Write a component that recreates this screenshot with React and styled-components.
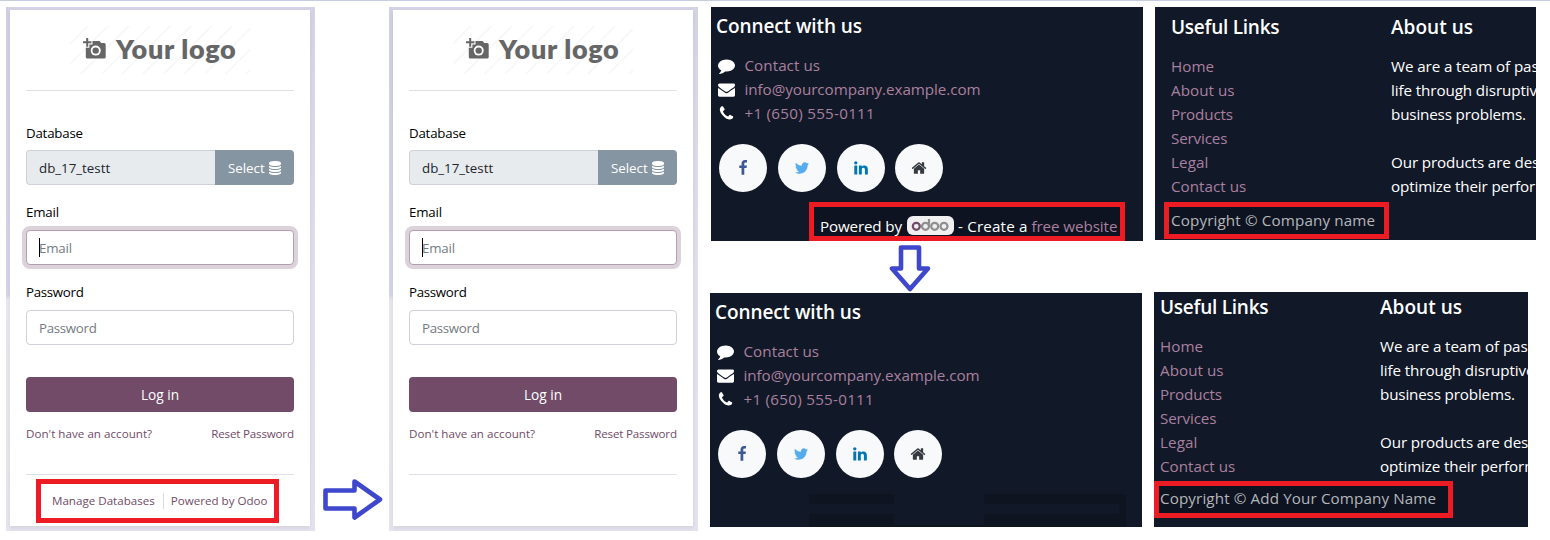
import React from "react";
import styled, { createGlobalStyle } from "styled-components";

const GlobalStyle = createGlobalStyle`
  *, *::before, *::after { box-sizing: border-box; }
  body { margin: 0; background: #fff; font-family: "Open Sans", "Noto Sans", sans-serif; }
`;

/* ---------- shared ---------- */

const Txt = styled.span`
  letter-spacing: ${(p) => p.$ls || 0}px;
  margin-right: ${(p) => -(p.$ls || 0)}px;
  white-space: nowrap;
`;

const Page = styled.main`
  display: flex;
  align-items: flex-start;
  width: 1550px;
  height: 540px;
  padding: 6px 0 0 6px;
  border-top: 1px solid #c6cde0;
  overflow: hidden;
`;

const Glyph = styled.svg`
  display: block;
  flex: none;
  width: ${(p) => p.$size || 16}px;
  height: ${(p) => p.$size || 16}px;
  fill: currentColor;
`;

const PATHS = {
  comment:
    "M1792 896q0 174-120 321.5t-326 233-450 85.5q-70 0-145-8-198 175-460 242-49 14-114 22-17 2-30.5-9t-17.5-29v-1q-3-4-.5-12t2-10 4.5-9.5l6-9 7-8.5 8-9q7-8 31-34.5t34.5-38 31-39.5 32.5-51 27-59 26-76q-157-89-247.5-220t-90.5-281q0-130 71-248.5t191-204.5 286-136.5 348-50.5q244 0 450 85.5t326 233 120 321.5z",
  envelope:
    "M1792 710v794q0 66-47 113t-113 47h-1472q-66 0-113-47t-47-113v-794q44 49 101 87 362 246 497 345 57 42 92.5 65.5t94.5 48 110 24.5h2q51 0 110-24.5t94.5-48 92.5-65.5q170-123 498-345 57-39 100-87zm0-294q0 79-49 151t-122 123q-376 261-468 325-10 7-42.5 31t-54 38.5-52 32.5-57.5 27-50 9h-2q-23 0-50-9t-57.5-27-52-32.5-54-38.5-42.5-31q-91-64-262-182.5t-205-142.5q-62-42-117-115.5t-55-136.5q0-78 41.5-130t118.5-52h1472q65 0 112.5 47t47.5 113z",
  phone:
    "M1600 1240q0 27-10 70.5t-21 68.5q-21 50-122 106-94 51-186 51-27 0-53-3.5t-57.5-12.5-47-14.5-55.5-20.5-49-18q-98-35-175-83-127-79-264-216t-216-264q-48-77-83-175-3-9-18-49t-20.5-55.5-14.5-47-12.5-57.5-3.5-53q0-92 51-186 56-101 106-122 25-11 68.5-21t70.5-10q14 0 21 3 18 6 53 76 11 19 30 54t35 63.5 31 53.5q3 4 17.5 25t21.5 35.5 7 28.5q0 20-28.5 50t-62 55-62 53-28.5 46q0 9 5 22.5t8.5 20.5 14 24 11.5 19q76 137 174 235t235 174q2 1 19 11.5t24 14 20.5 8.500 22.500 5q18 0 46-28.5t53-62 55-62 50-28.5q14 0 28.5 7t35.5 21.5 25 17.5q25 15 53.5 31t63.5 35 54 30q70 35 76 53 3 7 3 21z",
  facebook:
    "M1343 12v264h-157q-86 0-116 36t-30 108v189h293l-39 296h-254v759h-306v-759h-255v-296h255v-218q0-186 104-288.5t277-102.5q147 0 228 12z",
  twitter:
    "M1684 408q-67 98-162 167 1 14 1 42 0 130-38 259.5t-115.5 248.5-184.5 210.5-258 146-323 54.5q-271 0-496-145 35 4 78 4 225 0 401-138-105-2-188-64.5t-114-159.5q33 5 61 5 43 0 85-11-112-23-185.5-111.5t-73.5-205.5v-4q68 38 146 41-66-44-105-115t-39-154q0-88 44-163 121 149 294.5 238.5t371.5 99.5q-8-38-8-74 0-134 94.5-228.5t228.5-94.5q140 0 236 102 109-21 205-78-37 115-142 178 93-10 186-50z",
  linkedin:
    "M477 625v991h-330v-991h330zm21-306q1 73-50.5 122t-135.5 49h-2q-82 0-132-49t-50-122q0-74 51.5-122.5t134.5-48.5 133 48.5 51 122.5zm1166 729v568h-329v-530q0-105-40.5-164.5t-126.5-59.5q-63 0-105.5 34.5t-63.5 85.5q-11 30-11 81v553h-329q2-399 2-647t-1-296l-1-48h329v144h-2q20-32 41-56t56.5-52 87-43.5 114.5-15.5q171 0 275 113.5t104 332.5z",
  home: "M1472 992v480q0 26-19 45t-45 19h-384v-384h-256v384h-384q-26 0-45-19t-19-45v-480q0-1 .5-3t.5-3l575-474 575 474q1 2 1 6zm223-69l-62 74q-8 9-21 11h-3q-13 0-21-7l-692-577-692 577q-12 8-24 7-13-2-21-11l-62-74q-8-10-7-23.5t11-21.5l719-599q32-26 76-26t76 26l244 204v-195q0-14 9-23t23-9h192q14 0 23 9t9 23v408l219 182q10 8 11 21.5t-7 23.5z",
  database:
    "M896 768q237 0 443-43t325-127v170q0 69-103 128t-280 93.5-385 34.5-385-34.5-280-93.5-103-128v-170q119 84 325 127t443 43zm0 768q237 0 443-43t325-127v170q0 69-103 128t-280 93.5-385 34.5-385-34.5-280-93.5-103-128v-170q119 84 325 127t443 43zm0-384q237 0 443-43t325-127v170q0 69-103 128t-280 93.5-385 34.5-385-34.5-280-93.5-103-128v-170q119 84 325 127t443 43zm0-1152q208 0 385 34.5t280 93.5 103 128v128q0 69-103 128t-280 93.5-385 34.5-385-34.5-280-93.5-103-128v-128q0-69 103-128t280-93.5 385-34.5z",
};

const Icon = ({ name, size }) => (
  <Glyph viewBox="0 0 1792 1792" $size={size} aria-hidden="true">
    <path d={PATHS[name]} />
  </Glyph>
);

/* ---------- login panel ---------- */

const LoginFrame = styled.section`
  flex: none;
  width: 309px;
  height: 524px;
  padding: 3px 5px 5px 4px;
  background:
    linear-gradient(170deg, #d0cfe3 0%, #d4d3e9 98%, #e8e7ef 100%) 0 0 / 4px 293px no-repeat,
    linear-gradient(#e8e7ef, #e6e5ef) 0 293px / 4px 231px no-repeat,
    linear-gradient(#d4d3e6, #e0deed 50%, #e4e2ee) 304px 0 / 5px 524px no-repeat,
    linear-gradient(#d4d3e5, #d4d3e5) 0 0 / 309px 3px no-repeat,
    #e4e3ed;
`;

const Card = styled.div`
  display: flex;
  flex-direction: column;
  height: 516px;
  padding: 16px 16px 0;
  background: #fff;
  box-shadow: 0 2px 4px rgba(0, 0, 0, 0.07);
`;

const Logo = styled.div`
  display: flex;
  align-items: center;
  align-self: center;
  width: 180px;
  height: 48px;
  padding-left: 13px;
  color: #666;
  background: repeating-linear-gradient(135deg, #fff 0 11.3px, #f8f8f8 11.8px 13.2px, #fff 13.7px 14.6px);
`;

const LogoText = styled.span`
  margin: -2px 0 0 10px;
  font: 800 27px/48px Lato, sans-serif;
  letter-spacing: 0.65px;
  white-space: nowrap;
`;

const Camera = styled.svg`
  flex: none;
  width: 23px;
  height: 22px;
  margin-top: -3px;
`;

const Rule = styled.hr`
  width: 100%;
  height: 1px;
  margin: ${(p) => p.$top}px 0 0;
  border: 0;
  background: ${(p) => p.$color || "#dee0e4"};
`;

const Label = styled.label`
  margin-top: ${(p) => p.$top}px;
  font-size: 13.3px;
  line-height: 20px;
  color: #000;
`;

const Field = styled.div`
  display: flex;
  align-items: center;
  height: 35px;
  margin-top: ${(p) => p.$top || 8}px;
  padding-left: 12px;
  font-size: 13.3px;
  color: ${(p) => (p.$filled ? "#21262d" : "#757b82")};
  background: ${(p) => (p.$filled ? "#e8ebee" : "#fff")};
  border: 1px solid ${(p) => (p.$focus ? "#b49fb2" : "#cfd1d9")};
  border-radius: 4px;
  box-shadow: ${(p) => (p.$focus ? "0 0 0 4px #dcd2da" : "none")};
`;

const DbRow = styled.div`
  display: flex;
  margin-top: 7px;
  ${Field} { flex: 1; margin-top: 0; border-right: 0; border-radius: 4px 0 0 4px; }
`;

const SelectButton = styled.button`
  display: flex;
  align-items: center;
  gap: 3px;
  width: 79px;
  height: 35px;
  padding: 0 0 0 13px;
  font: 13.3px "Open Sans", sans-serif;
  color: #fff;
  background: #8595a2;
  border: 0;
  border-radius: 0 4px 4px 0;
`;

const Caret = styled.i`
  width: 1px;
  height: 19px;
  margin-right: -1px;
  background: #000;
`;

const LoginButton = styled.button`
  height: 35px;
  margin-top: 32px;
  padding: 0;
  font: 13.7px "Open Sans", sans-serif;
  color: #fff;
  background: #714b67;
  border: 0;
  border-radius: 4px;
`;

const LinkRow = styled.div`
  display: flex;
  justify-content: ${(p) => (p.$footer ? "flex-start" : "space-between")};
  margin: ${(p) => (p.$footer ? "17px 0 0 26px" : "13px 0 0")};
  font-size: 11.6px;
  line-height: 18px;
  color: #714b67;
`;

const Divider = styled.i`
  width: 1px;
  height: 16px;
  margin: 1px 7px 0 8px;
  background: #d8dae3;
`;

const RedBox = styled.div`
  position: absolute;
  left: ${(p) => p.$x}px;
  top: ${(p) => p.$y}px;
  width: ${(p) => p.$w}px;
  height: ${(p) => p.$h}px;
  border: 5px solid #ed1c24;
  pointer-events: none;
`;

const Marked = styled.div`
  position: relative;
  flex: none;
`;

function LoginPanel({ footer }) {
  return (
    <Marked>
      <LoginFrame>
        <Card>
          <Logo>
            <Camera viewBox="0 0 23 22">
              <path
                fill="#666"
                d="M3.2 0h2v3.300h3.200v2H5.200v3.400h-2V5.300H0v-2h3.200zM9.500 3h7l1.700 2h3q1.500 0 1.500 1.500V19q0 1.500-1.500 1.500H4.300Q2.800 20.500 2.800 19V9.800H6.400V6.400H9.500z"
              />
              <circle cx="12.700" cy="12.600" r="5" fill="#fff" />
              <circle cx="12.700" cy="12.600" r="3.200" fill="#666" />
            </Camera>
            <LogoText>Your logo</LogoText>
          </Logo>
          <Rule $top={16} />
          <Label $top={32}><Txt $ls={-0.21}>Database</Txt></Label>
          <DbRow>
            <Field $filled><Txt>db_17_testt</Txt></Field>
            <SelectButton>
              <Txt>Select</Txt>
              <Icon name="database" size={14} />
            </SelectButton>
          </DbRow>
          <Label $top={17}><Txt $ls={-0.2}>Email</Txt></Label>
          <Field $focus><Caret /><Txt $ls={-0.2}>Email</Txt></Field>
          <Label $top={17}><Txt $ls={-0.3}>Password</Txt></Label>
          <Field><Txt $ls={-0.3}>Password</Txt></Field>
          <LoginButton>Log in</LoginButton>
          <LinkRow>
            <Txt $ls={0.03}>Don't have an account?</Txt>
            <Txt $ls={-0.18}>Reset Password</Txt>
          </LinkRow>
          <Rule $top={31} $color="#dfdfe9" />
          {footer && (
            <LinkRow $footer>
              <Txt>Manage Databases</Txt>
              <Divider />
              <Txt>Powered by Odoo</Txt>
            </LinkRow>
          )}
        </Card>
      </LoginFrame>
      {footer && <RedBox $x={30} $y={472} $w={243} $h={44} />}
    </Marked>
  );
}

/* ---------- arrows ---------- */

const ArrowRight = styled.svg`
  flex: none;
  width: 62px;
  height: 44px;
  margin: 470px 5px 0 7px;
`;

const ArrowDown = styled.svg`
  display: block;
  width: 46px;
  height: 52px;
  margin-left: 177px;
`;

/* ---------- footer previews ---------- */

const Column = styled.div`
  flex: none;
  width: ${(p) => p.$w}px;
  margin-left: ${(p) => p.$left}px;
`;

const Dark = styled.section`
  position: relative;
  width: ${(p) => p.$w}px;
  height: ${(p) => p.$h}px;
  margin: ${(p) => p.$top || 0}px 0 0 ${(p) => p.$left || 0}px;
  overflow: hidden;
  color: #fff;
  background: #111827;
  font-size: 15.2px;
`;

const Heading = styled.h5`
  margin: 0;
  font: 600 19px/24px "Open Sans", sans-serif;
  white-space: nowrap;
`;

const Connect = styled.div`
  padding: ${(p) => p.$top}px 0 0 5px;
`;

const ContactList = styled.ul`
  display: grid;
  grid-auto-rows: 24px;
  margin: 15px 0 0;
  padding: 0 0 0 2px;
  list-style: none;
`;

const Contact = styled.li`
  display: flex;
  align-items: center;
  gap: 9.5px;
  line-height: 24px;
`;

const IconCell = styled.span`
  display: flex;
  justify-content: center;
  width: 17px;
`;

const Purple = styled.span`
  color: #a9809f;
`;

const Socials = styled.div`
  display: flex;
  gap: 11px;
  margin: 19px 0 0 3px;
`;

const Social = styled.span`
  display: grid;
  place-items: center;
  width: 48px;
  height: 48px;
  border-radius: 50%;
  color: ${(p) => p.$color};
  background: #f8f9fa;
  &:last-child { margin-left: -1px; }
`;

const Powered = styled.div`
  position: relative;
  display: flex;
  align-items: center;
  width: 306px;
  height: 29px;
  margin: 15px 0 0 103px;
  padding: 8px 0 0 6px;
  background: #0d1320;
  outline: 5px solid #ed1c24;
  line-height: 24px;
`;

const OdooBadge = styled.svg`
  flex: none;
  width: 47px;
  height: 19px;
  margin: 0 4px 0 5px;
`;

const Shade = styled.i`
  position: absolute;
  left: ${(p) => p.$x}px;
  top: ${(p) => p.$y}px;
  width: ${(p) => p.$w}px;
  height: ${(p) => p.$h}px;
  background: #0e1420;
`;

const CONTACTS = [
  ["comment", "Contact us", 0.05],
  ["envelope", "info@yourcompany.example.com", -0.05],
  ["phone", "+1 (650) 555-0111", 0.27],
];

const SOCIALS = [
  ["facebook", "#3b5998"],
  ["twitter", "#55acee"],
  ["linkedin", "#0077b5"],
  ["home", "#343a40"],
];

function ConnectBlock({ top }) {
  return (
    <Connect $top={top}>
      <Heading><Txt $ls={-0.09}>Connect with us</Txt></Heading>
      <ContactList>
        {CONTACTS.map(([icon, text, ls]) => (
          <Contact key={icon}>
            <IconCell><Icon name={icon} size={17} /></IconCell>
            <Purple><Txt $ls={ls}>{text}</Txt></Purple>
          </Contact>
        ))}
      </ContactList>
      <Socials>
        {SOCIALS.map(([icon, color]) => (
          <Social key={icon} $color={color}><Icon name={icon} size={16} /></Social>
        ))}
      </Socials>
    </Connect>
  );
}

const LinksGrid = styled.div`
  display: grid;
  grid-template-columns: 220px 1fr;
  padding: ${(p) => p.$top}px 0 0 ${(p) => p.$left}px;
`;

const Lines = styled.div`
  display: grid;
  grid-auto-rows: 24px;
  margin-top: 15px;
  line-height: 24px;
  color: ${(p) => p.$color};
`;

const Copyright = styled.div`
  position: relative;
  width: ${(p) => p.$w}px;
  height: 27px;
  margin: ${(p) => p.$top}px 0 0 ${(p) => p.$left}px;
  padding-left: ${(p) => p.$pad}px;
  background: #0d1320;
  outline: 5px solid #ed1c24;
  line-height: ${(p) => p.$line}px;
  color: #b4b6ba;
`;

const LINKS = [
  ["Home", 0.03], ["About us", 0.05], ["Products", -0.14],
  ["Services", -0.15], ["Legal", 0.1], ["Contact us", 0.02],
];

const ABOUT = [
  ["We are a team of pas", -0.1], ["life through disruptive", -0.1],
  ["business problems.", -0.15], ["", 0],
  ["Our products are des", -0.12], ["optimize their perform", -0.13],
];

function LinksBlock({ top, left }) {
  return (
    <LinksGrid $top={top} $left={left}>
      <div>
        <Heading><Txt $ls={-0.25}>Useful Links</Txt></Heading>
        <Lines $color="#a9809f">
          {LINKS.map(([t, ls]) => <Txt key={t} $ls={ls}>{t}</Txt>)}
        </Lines>
      </div>
      <div>
        <Heading><Txt $ls={0.02}>About us</Txt></Heading>
        <Lines $color="#fff">
          {ABOUT.map(([t, ls]) => <Txt key={t} $ls={ls}>{t}</Txt>)}
        </Lines>
      </div>
    </LinksGrid>
  );
}

export default function App() {
  return (
    <>
      <GlobalStyle />
      <Page>
        <LoginPanel footer />
        <ArrowRight viewBox="322 477 62 44">
          <path
            d="M325.500 490.500H354.500V481.500L380 499.500L354.500 517.500V508.500H325.500Z"
            fill="none" stroke="#3f48cc" strokeWidth="4.600" strokeLinejoin="round"
          />
        </ArrowRight>
        <LoginPanel />

        <Column $w={433} $left={12}>
          <Dark $w={432} $h={234} $left={1}>
            <ConnectBlock top={7} />
            <Powered>
              <Txt $ls={-0.16}>Powered by</Txt>
              <OdooBadge viewBox="0 0 47 19">
                <rect width="47" height="19" rx="6" fill="#f1f0f0" />
                <g fill="none" strokeWidth="2.200">
                  <circle cx="9.300" cy="10.300" r="3.500" stroke="#714b67" />
                  <circle cx="18.500" cy="10.300" r="3.500" stroke="#8f8f8f" />
                  <path d="M22 10.300V3" stroke="#8f8f8f" />
                  <circle cx="27.700" cy="10.300" r="3.500" stroke="#8f8f8f" />
                  <circle cx="37" cy="10.300" r="3.500" stroke="#8f8f8f" />
                </g>
              </OdooBadge>
              <Txt $ls={0.17}>- Create a</Txt>
              <Purple>&nbsp;<Txt $ls={-0.08}>free website</Txt></Purple>
            </Powered>
          </Dark>
          <ArrowDown viewBox="887 241 46 52">
            <path
              d="M901 247.500H919V268.500H928L910 289L892 268.500H901Z"
              fill="none" stroke="#3f48cc" strokeWidth="4.600" strokeLinejoin="round"
            />
          </ArrowDown>
          <Dark $w={432} $h={234}>
            <ConnectBlock top={7} />
            <Shade $x={99} $y={201} $w={85} $h={10} />
            <Shade $x={99} $y={221} $w={85} $h={13} />
            <Shade $x={274} $y={201} $w={142} $h={10} />
            <Shade $x={274} $y={221} $w={142} $h={13} />
            <Shade $x={409} $y={211} $w={7} $h={10} />
            <Shade $x={184} $y={232} $w={90} $h={2} />
          </Dark>
        </Column>

        <Column $w={383} $left={11}>
          <Dark $w={381} $h={233} $left={1}>
            <LinksBlock top={8} left={16} />
            <Copyright $w={215} $top={9} $left={14} $pad={2} $line={26}>
              <Txt $ls={0.14}>Copyright © Company name</Txt>
            </Copyright>
          </Dark>
          <Dark $w={374} $h={235} $top={52}>
            <LinksBlock top={3} left={6} />
            <Copyright $w={289} $top={8} $left={5} $pad={1} $line={24}>
              <Txt $ls={0.12}>Copyright © Add Your Company Name</Txt>
            </Copyright>
          </Dark>
        </Column>
      </Page>
    </>
  );
}
